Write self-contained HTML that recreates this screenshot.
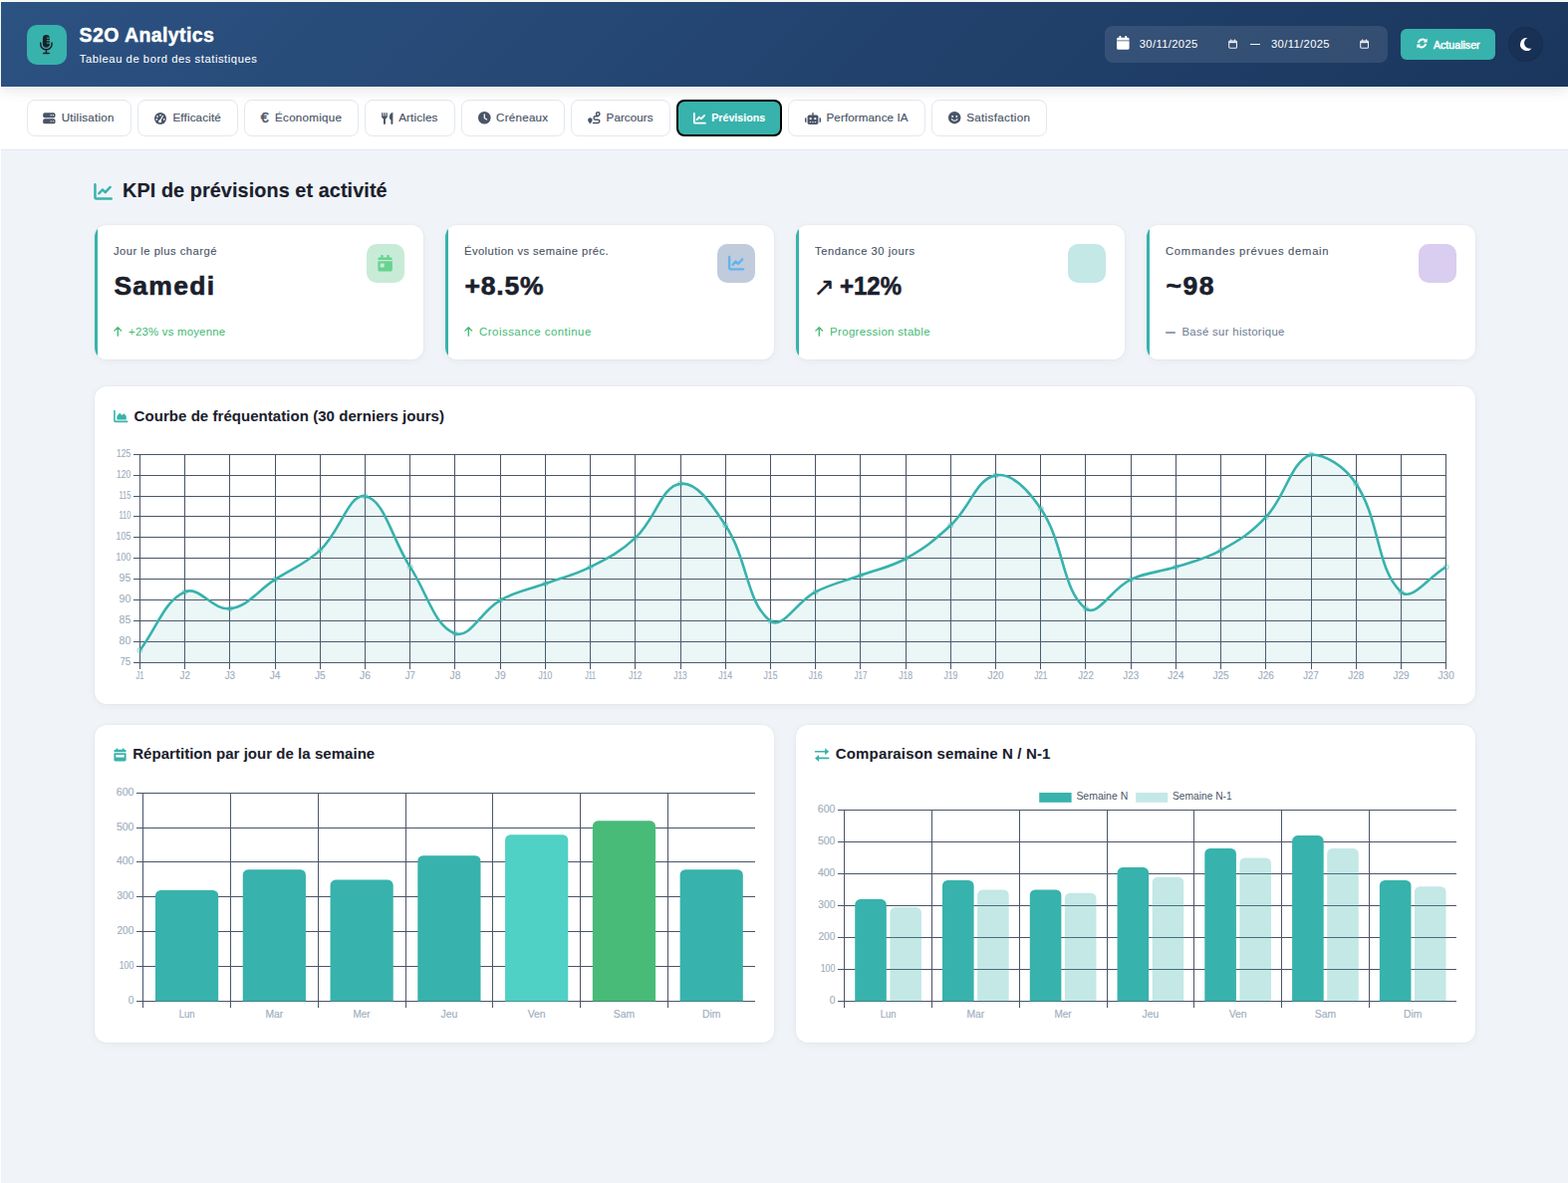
<!DOCTYPE html>
<html lang="fr">
<head>
<meta charset="utf-8">
<meta name="viewport" content="width=1574">
<title>S2O Analytics - Tableau de bord des statistiques</title>
<style>
*{box-sizing:border-box;margin:0;padding:0}
html,body{width:1574px;height:1188px;overflow:hidden;background:#fff}
body{font-family:"Liberation Sans", sans-serif;position:relative;-webkit-font-smoothing:antialiased}
#app{position:absolute;left:0;top:0;width:1574px;height:1188px;overflow:hidden;background:#fff}
.edge{position:absolute;left:0;top:0;width:1574px;height:1px;background:#f5f5f5;z-index:9}
.t{position:absolute;white-space:nowrap;display:block;font-weight:400;margin:0}
.i{position:absolute;display:block;overflow:visible}
button{font-family:"Liberation Sans", sans-serif;border:0;background:none;cursor:pointer;padding:0}
header{position:absolute;left:1px;top:2px;width:1573px;height:85px;background:linear-gradient(135deg,#2c5282 0%,#1a365d 100%);box-shadow:0 3px 14px rgba(0,0,0,.11);z-index:3}
.logo{position:absolute;left:26px;top:23px;width:40px;height:40px;border-radius:10px;background:#38b2ac}
.daterange{position:absolute;left:1108px;top:24px;width:284px;height:37px;border-radius:8px;background:rgba(255,255,255,.1)}
.dash{position:absolute;width:10px;height:1px;background:#fff;opacity:.95}
.refresh{position:absolute;left:1405px;top:27px;width:95px;height:31px;border-radius:6px;background:#38b2ac}
.theme{position:absolute;left:1513px;top:25px;width:35px;height:35px;border-radius:50%;background:rgba(0,0,0,.11);border:1px solid rgba(0,0,0,.10)}
nav{position:absolute;left:1px;top:87px;width:1573px;height:64px;background:#fff;border-bottom:1px solid #e2e8f0;z-index:2}
.tab{position:absolute;height:37px;border:1px solid #e2e8f0;border-radius:8px;background:#fff}
.tab.active{background:#38b2ac;border:2px solid #000}
main{position:absolute;left:1px;top:151px;width:1573px;height:1037px;background:#f0f4f8;z-index:1}
.sechead{position:absolute;left:0;top:0;width:100%;height:60px}
.kpi{position:absolute;width:330px;height:135px;border-radius:12px;background:linear-gradient(90deg,#38b2ac 0,#38b2ac 3px,#fff 3px,#fff 100%);padding-left:3px;box-shadow:0 0 2px rgba(45,55,72,.09),0 2px 9px rgba(0,0,0,.045)}
.kico{position:absolute;left:273px;top:19px;width:38px;height:39px;border-radius:10px}
.card{position:absolute;border-radius:12px;background:#fff;box-shadow:0 0 2px rgba(45,55,72,.09),0 2px 9px rgba(0,0,0,.045)}
.chart{position:absolute;display:block}
.ax text{font-family:"Liberation Sans", sans-serif;font-size:10.2px;fill:#a0aec0;stroke:#a0aec0;stroke-width:.15px}
.lg text{font-family:"Liberation Sans", sans-serif;font-size:10.3px;fill:#4a5568}
</style>
</head>
<body>
<div id="app">
<div class="edge"></div>
<header>
<div class="logo"><svg class="i" style="left:13.10px;top:9.90px;" width="12.80" height="19.20" viewBox="0 0 12.8 19.2" aria-hidden="true"><rect x="2.9" y="0" width="7" height="12.8" rx="3.5" fill="#1a202c"/><path d="M6.900 3.200h3M6.900 5.700h3M6.900 8.200h3" stroke="#38b2ac" stroke-width="1"/><path d="M.75 7.900v1.300a5.650 5.650 0 0 0 11.300 0V7.900" fill="none" stroke="#1a202c" stroke-width="1.500" stroke-linecap="round"/><path d="M6.400 15.200v3.200M3.600 18.450h5.600" fill="none" stroke="#1a202c" stroke-width="1.500" stroke-linecap="round"/></svg></div><h1 class="t" style="left:78.60px;top:21.00px;font-size:19.5px;line-height:25px;color:#fff;font-weight:700;letter-spacing:0.398px;-webkit-text-stroke:0.45px #fff;">S2O Analytics</h1><p class="t" style="left:78.80px;top:50.00px;font-size:11.2px;line-height:14px;color:#fff;letter-spacing:0.566px;-webkit-text-stroke:0.05px #fff;">Tableau de bord des statistiques</p><div class="daterange"><svg class="i" style="left:12.40px;top:10.20px;" width="12.60" height="13.80" viewBox="0 0 12.6 13.8" aria-hidden="true"><path fill="#fff" d="M2.400.7c0-.4.300-.7.700-.7h.6c.4 0 .7.300.7.700v1h3.800v-1c0-.4.300-.7.700-.7h.6c.4 0 .7.300.7.700v1h.9c.8 0 1.500.7 1.500 1.500v1.400H0V3.200c0-.8.700-1.500 1.500-1.500h.9z"/><path fill="#fff" d="M0 5.300h12.600v7c0 .8-.7 1.500-1.500 1.500H1.500c-.8 0-1.500-.7-1.500-1.500z"/></svg><span class="t" style="left:34.70px;top:11.31px;font-size:11.2px;line-height:14px;color:#fff;letter-spacing:0.381px;-webkit-text-stroke:0.03px #fff;">30/11/2025</span><svg class="i" style="left:124.00px;top:13.00px;opacity:.92" width="9.20" height="9.90" viewBox="0.3 0 9.4 10.2" aria-hidden="true"><rect x="1" y="2" width="8" height="7.5" rx="1" fill="none" stroke="#fff" stroke-width="1.1"/><path d="M1 3.4h8" stroke="#fff" stroke-width="1.8"/><path d="M3 0.6v1.6M7 0.6v1.6" stroke="#fff" stroke-width="1.1"/></svg><span class="dash" style="left:146px;top:18px"></span><span class="t" style="left:167.00px;top:11.31px;font-size:11.2px;line-height:14px;color:#fff;letter-spacing:0.381px;-webkit-text-stroke:0.03px #fff;">30/11/2025</span><svg class="i" style="left:256.40px;top:13.00px;opacity:.92" width="9.20" height="9.90" viewBox="0.3 0 9.4 10.2" aria-hidden="true"><rect x="1" y="2" width="8" height="7.5" rx="1" fill="none" stroke="#fff" stroke-width="1.1"/><path d="M1 3.4h8" stroke="#fff" stroke-width="1.8"/><path d="M3 0.6v1.6M7 0.6v1.6" stroke="#fff" stroke-width="1.1"/></svg></div><button class="refresh" type="button"><svg class="i" style="left:15.60px;top:9.40px;" width="11.00" height="11.00" viewBox="0 0 12 12" aria-hidden="true"><path fill="none" stroke="#fff" stroke-width="2.1" d="M2 5.6A4.7 4.7 0 0 1 10.2 3.4"/><path fill="#fff" d="M11.6 0.6v4.4H7.2z"/><path fill="none" stroke="#fff" stroke-width="2.1" d="M10 6.400A4.700 4.700 0 0 1 1.800 8.600"/><path fill="#fff" d="M.4 11.400V7h4.400z"/></svg><span class="t" style="left:32.90px;top:8.71px;font-size:10.7px;line-height:14px;color:#fff;letter-spacing:-0.015px;-webkit-text-stroke:0.45px #fff;">Actualiser</span></button><button class="theme" type="button" aria-label="Mode sombre"><svg class="i" style="left:12.00px;top:10.40px;" width="11.40" height="12.90" viewBox="0.9 0 11.4 12.9" aria-hidden="true"><path fill="#fff" d="M7.400 0A6.500 6.500 0 1 0 11.600 10.400 5.300 5.300 0 0 1 7.400 0z"/></svg></button>
</header>
<nav aria-label="Sections">
<button type="button" class="tab" style="left:26px;top:13px;width:105px"><svg class="i" style="left:15.10px;top:11.90px;" width="12.70" height="11.60" viewBox="0 0 13 12.2" aria-hidden="true"><rect x="0" y="0.3" width="13" height="5.200" rx="1.700" fill="#4a5568"/><rect x="0" y="6.700" width="13" height="5.200" rx="1.700" fill="#4a5568"/><circle cx="8.400" cy="2.900" r=".75" fill="#fff"/><circle cx="10.700" cy="2.900" r=".75" fill="#fff"/><circle cx="8.400" cy="9.300" r=".75" fill="#fff"/><circle cx="10.700" cy="9.300" r=".75" fill="#fff"/></svg><span class="t" style="left:33.70px;top:9.40px;font-size:11.6px;line-height:15px;color:#4a5568;letter-spacing:0.243px;-webkit-text-stroke:0.18px #4a5568;">Utilisation</span></button><button type="button" class="tab" style="left:137px;top:13px;width:101px"><svg class="i" style="left:16.00px;top:11.60px;" width="12.00" height="12.00" viewBox="0 0 12 12" aria-hidden="true"><circle cx="6" cy="6" r="6" fill="#4a5568"/><circle cx="6" cy="2.600" r=".85" fill="#fff"/><circle cx="3" cy="3.900" r=".85" fill="#fff"/><circle cx="2.300" cy="6.800" r=".85" fill="#fff"/><circle cx="9.700" cy="6.800" r=".85" fill="#fff"/><path d="M5.600 8.800L8.400 3.400" stroke="#fff" stroke-width="1.1" stroke-linecap="round"/><circle cx="5.600" cy="8.700" r="1.500" fill="#fff"/></svg><span class="t" style="left:34.40px;top:9.40px;font-size:11.6px;line-height:15px;color:#4a5568;letter-spacing:0.175px;-webkit-text-stroke:0.18px #4a5568;">Efficacité</span></button><button type="button" class="tab" style="left:244px;top:13px;width:115px"><span class="t" style="left:15.80px;top:8.31px;font-size:14.2px;line-height:18px;color:#4a5568;-webkit-text-stroke:0.5px #4a5568;">€</span><span class="t" style="left:30.10px;top:9.40px;font-size:11.6px;line-height:15px;color:#4a5568;letter-spacing:0.261px;-webkit-text-stroke:0.18px #4a5568;">Économique</span></button><button type="button" class="tab" style="left:365px;top:13px;width:91px"><svg class="i" style="left:16.00px;top:11.60px;" width="11.60" height="12.00" viewBox="0 0 11.8 12.2" aria-hidden="true"><path fill="none" stroke="#4a5568" stroke-width="1.3" stroke-linecap="round" d="M.8.7v3.400M3 .7v3.400M5.200.7v3.400"/><path fill="#4a5568" d="M.2 3.600h5.600c0 1.700-.8 2.600-1.800 3v4.600c0 .5-.4.900-1 .9s-1-.4-1-.9V6.600c-1-.4-1.800-1.300-1.800-3z"/><path fill="#4a5568" d="M11.600 0c-1.800 0-3.600 2-3.600 4.800 0 1.600.7 2.400 1.600 2.800v3.600c0 .5.400.9 1 .9s1-.4 1-.9z"/></svg><span class="t" style="left:33.20px;top:9.40px;font-size:11.6px;line-height:15px;color:#4a5568;letter-spacing:0.169px;-webkit-text-stroke:0.18px #4a5568;">Articles</span></button><button type="button" class="tab" style="left:462px;top:13px;width:104px"><svg class="i" style="left:15.70px;top:11.30px;" width="12.60" height="12.60" viewBox="0 0 12.8 12.8" aria-hidden="true"><circle cx="6.400" cy="6.400" r="6.400" fill="#4a5568"/><path d="M6.400 3v3.600l2.300 1.500" fill="none" stroke="#fff" stroke-width="1.300" stroke-linecap="round" stroke-linejoin="round"/></svg><span class="t" style="left:34.10px;top:9.40px;font-size:11.6px;line-height:15px;color:#4a5568;letter-spacing:0.246px;-webkit-text-stroke:0.18px #4a5568;">Créneaux</span></button><button type="button" class="tab" style="left:572px;top:13px;width:100px"><svg class="i" style="left:16.00px;top:11.40px;" width="12.70" height="12.40" viewBox="0 0 12.8 12.4" aria-hidden="true"><circle cx="10.3" cy="2.4" r="1.75" fill="none" stroke="#4a5568" stroke-width="1.5"/><path d="M2.4 6.200a2.300 2.300 0 0 1 2.300 2.300c0 1.300-1.500 2.900-2.300 3.800C1.600 11.400.1 9.800.1 8.500a2.300 2.300 0 0 1 2.300-2.300z" fill="#4a5568"/><path d="M10.3 4.800H7.800a1.700 1.700 0 0 0 0 3.400h2.400a1.700 1.700 0 0 1 0 3.400H5.600" fill="none" stroke="#4a5568" stroke-width="1.5" stroke-linecap="round"/></svg><span class="t" style="left:34.60px;top:9.40px;font-size:11.6px;line-height:15px;color:#4a5568;letter-spacing:0.071px;-webkit-text-stroke:0.18px #4a5568;">Parcours</span></button><button type="button" class="tab active" style="left:678px;top:13px;width:106px"><svg class="i" style="left:15.00px;top:10.60px;" width="12.60" height="11.60" viewBox="0 0 13.2 11.8" aria-hidden="true"><path d="M.9 .8v9.200c0 .6.400 1 1 1h10.600" fill="none" stroke="#fff" stroke-width="1.9" stroke-linecap="round" stroke-linejoin="round"/><path d="M3.700 7.300l2.500-2.700 2 1.900 3.500-3.700" fill="none" stroke="#fff" stroke-width="1.9" stroke-linecap="round" stroke-linejoin="round"/></svg><span class="t" style="left:33.20px;top:9.40px;font-size:10.7px;line-height:14px;color:#fff;font-weight:700;-webkit-text-stroke:0.1px #fff;">Prévisions</span></button><button type="button" class="tab" style="left:790px;top:13px;width:138px"><svg class="i" style="left:16.00px;top:11.90px;" width="16.00" height="12.00" viewBox="0 0 16 12" aria-hidden="true"><rect x="7.250" y="0" width="1.500" height="3" rx=".7" fill="#4a5568"/><rect x="2.600" y="2.400" width="10.800" height="9.600" rx="1.800" fill="#4a5568"/><rect x="0" y="5.200" width="1.500" height="4.600" rx=".6" fill="#4a5568"/><rect x="14.500" y="5.200" width="1.500" height="4.600" rx=".6" fill="#4a5568"/><circle cx="5.700" cy="6.200" r="1.100" fill="#fff"/><circle cx="10.300" cy="6.200" r="1.100" fill="#fff"/><path d="M4.800 9.700h1.400M7.300 9.700h1.400M9.800 9.700h1.400" stroke="#fff" stroke-width=".9"/></svg><span class="t" style="left:37.50px;top:9.40px;font-size:11.6px;line-height:15px;color:#4a5568;letter-spacing:0.112px;-webkit-text-stroke:0.18px #4a5568;">Performance IA</span></button><button type="button" class="tab" style="left:934px;top:13px;width:116px"><svg class="i" style="left:16.30px;top:11.30px;" width="12.40" height="12.40" viewBox="0 0 12.6 12.6" aria-hidden="true"><circle cx="6.300" cy="6.300" r="6.300" fill="#4a5568"/><circle cx="4.200" cy="5" r=".95" fill="#fff"/><circle cx="8.400" cy="5" r=".95" fill="#fff"/><path d="M3.500 7.800a3.300 3.300 0 0 0 5.600 0" fill="none" stroke="#fff" stroke-width="1.100" stroke-linecap="round"/></svg><span class="t" style="left:34.20px;top:9.40px;font-size:11.6px;line-height:15px;color:#4a5568;letter-spacing:0.342px;-webkit-text-stroke:0.18px #4a5568;">Satisfaction</span></button>
</nav>
<main>
<div class="sechead"><svg class="i" style="left:92.60px;top:32.60px;" width="19.20" height="16.60" viewBox="0 0 13.4 11.8" aria-hidden="true"><path d="M.9 .8v9.200c0 .6.400 1 1 1h10.600" fill="none" stroke="#38b2ac" stroke-width="1.75" stroke-linecap="round" stroke-linejoin="round"/><path d="M3.700 7.300l2.500-2.700 2 1.900 3.500-3.700" fill="none" stroke="#38b2ac" stroke-width="1.75" stroke-linecap="round" stroke-linejoin="round"/></svg><h2 class="t" style="left:122.00px;top:28.00px;font-size:19.8px;line-height:25px;color:#1a202c;font-weight:700;letter-spacing:0.102px;-webkit-text-stroke:0.15px #1a202c;">KPI de prévisions et activité</h2></div><article class="kpi" style="left:94px;top:75px"><div class="t" style="left:19.00px;top:19.40px;font-size:11.2px;line-height:14px;color:#4a5568;letter-spacing:0.493px;-webkit-text-stroke:0.13px #4a5568;">Jour le plus chargé</div><div class="t" style="left:19.40px;top:44.21px;font-size:26.5px;line-height:34px;color:#1a202c;font-weight:700;letter-spacing:1.267px;-webkit-text-stroke:0.6px #1a202c;">Samedi</div><svg class="i" style="left:18.70px;top:102.30px;" width="8.60" height="9.70" viewBox="0 0.4 9.2 10.6" aria-hidden="true"><path d="M4.600 10.400V1.400M.9 4.900L4.600 1.200l3.700 3.700" fill="none" stroke="#48bb78" stroke-width="1.500" stroke-linecap="round" stroke-linejoin="round"/></svg><span class="t" style="left:34.10px;top:99.50px;font-size:11.4px;line-height:15px;color:#48bb78;letter-spacing:0.212px;-webkit-text-stroke:0.05px #48bb78;">+23% vs moyenne</span><div class="kico" style="background:rgb(200,235,215)"><svg class="i" style="left:11.40px;top:10.70px;" width="15.30" height="16.40" viewBox="0 0 15.3 16.4" aria-hidden="true"><path fill="#68d391" d="M3.300 .6c0-.4.300-.6.700-.6h1c.4 0 .7.200.7.600v1.800h3.700V.6c0-.4.300-.6.700-.6h1c.4 0 .7.200.7.600v1.800h1.400c.8 0 1.500.7 1.500 1.500V5H.4V3.900c0-.8.700-1.500 1.500-1.500h1.400z"/><path fill="#68d391" d="M.4 6.300h14.500v8.600c0 .8-.7 1.500-1.500 1.500H1.900c-.8 0-1.500-.7-1.500-1.500z"/><rect x="2.700" y="8.400" width="4" height="4" rx=".4" fill="rgb(200,235,215)"/></svg></div></article><article class="kpi" style="left:446px;top:75px"><div class="t" style="left:19.00px;top:19.40px;font-size:11.2px;line-height:14px;color:#4a5568;letter-spacing:0.436px;-webkit-text-stroke:0.13px #4a5568;">Évolution vs semaine préc.</div><div class="t" style="left:19.40px;top:44.21px;font-size:26.5px;line-height:34px;color:#1a202c;font-weight:700;letter-spacing:0.827px;-webkit-text-stroke:0.6px #1a202c;">+8.5%</div><svg class="i" style="left:18.70px;top:102.30px;" width="8.60" height="9.70" viewBox="0 0.4 9.2 10.6" aria-hidden="true"><path d="M4.600 10.400V1.400M.9 4.900L4.600 1.200l3.700 3.700" fill="none" stroke="#48bb78" stroke-width="1.500" stroke-linecap="round" stroke-linejoin="round"/></svg><span class="t" style="left:34.10px;top:99.50px;font-size:11.4px;line-height:15px;color:#48bb78;letter-spacing:0.499px;-webkit-text-stroke:0.05px #48bb78;">Croissance continue</span><div class="kico" style="background:rgb(192,203,220)"><svg class="i" style="left:11.00px;top:11.80px;" width="16.30" height="14.30" viewBox="0 0 13.4 11.8" aria-hidden="true"><path d="M.9 .8v9.200c0 .6.400 1 1 1h10.600" fill="none" stroke="#63b3ed" stroke-width="1.9" stroke-linecap="round" stroke-linejoin="round"/><path d="M3.700 7.300l2.500-2.700 2 1.900 3.500-3.700" fill="none" stroke="#63b3ed" stroke-width="1.9" stroke-linecap="round" stroke-linejoin="round"/></svg></div></article><article class="kpi" style="left:798px;top:75px"><div class="t" style="left:19.00px;top:19.40px;font-size:11.2px;line-height:14px;color:#4a5568;letter-spacing:0.548px;-webkit-text-stroke:0.13px #4a5568;">Tendance 30 jours</div><span class="t" style="left:17.60px;top:46.00px;font-size:25.6px;line-height:32px;color:#1a202c;-webkit-text-stroke:0.35px #1a202c;font-family:'DejaVu Sans',sans-serif;">↗</span><div class="t" style="left:44.20px;top:44.21px;font-size:26.5px;line-height:34px;color:#1a202c;font-weight:700;-webkit-text-stroke:0.6px #1a202c;transform:scaleX(0.9049);transform-origin:0 50%;">+12%</div><svg class="i" style="left:18.70px;top:102.30px;" width="8.60" height="9.70" viewBox="0 0.4 9.2 10.6" aria-hidden="true"><path d="M4.600 10.400V1.400M.9 4.900L4.600 1.200l3.700 3.700" fill="none" stroke="#48bb78" stroke-width="1.500" stroke-linecap="round" stroke-linejoin="round"/></svg><span class="t" style="left:34.10px;top:99.50px;font-size:11.4px;line-height:15px;color:#48bb78;letter-spacing:0.356px;-webkit-text-stroke:0.05px #48bb78;">Progression stable</span><div class="kico" style="background:rgb(195,232,230)"></div></article><article class="kpi" style="left:1150px;top:75px"><div class="t" style="left:19.00px;top:19.40px;font-size:11.2px;line-height:14px;color:#4a5568;letter-spacing:0.759px;-webkit-text-stroke:0.13px #4a5568;">Commandes prévues demain</div><div class="t" style="left:19.40px;top:44.21px;font-size:26.5px;line-height:34px;color:#1a202c;font-weight:700;letter-spacing:1.523px;-webkit-text-stroke:0.6px #1a202c;">~98</div><svg class="i" style="left:18.60px;top:106.80px;" width="10.00" height="2.00" viewBox="0 0 10 2" aria-hidden="true"><path d="M.7 1h8.600" stroke="#718096" stroke-width="1.600" stroke-linecap="round"/></svg><span class="t" style="left:35.40px;top:99.50px;font-size:11.4px;line-height:15px;color:#718096;letter-spacing:0.305px;-webkit-text-stroke:0.05px #718096;">Basé sur historique</span><div class="kico" style="background:rgb(217,205,240)"></div></article><section class="card " style="left:94px;top:237px;width:1386px;height:319px"><svg class="i" style="left:18.80px;top:24.00px;" width="14.60" height="12.20" viewBox="0 0 14.8 12.4" aria-hidden="true"><path d="M.9 .6v10c0 .6.400 1 1 1h12" fill="none" stroke="#38b2ac" stroke-width="1.600" stroke-linecap="round" stroke-linejoin="round"/><path fill="#38b2ac" d="M3.400 9.600V6.200l2.300-2.900c.3-.4.900-.4 1.200 0l1.400 1.700 1.700-1.300c.3-.3.800-.2 1.100.1l1.900 2.400v3.400z"/></svg><h3 class="t" style="left:39.60px;top:20.00px;font-size:15.0px;line-height:19px;color:#1a202c;font-weight:700;letter-spacing:0.052px;-webkit-text-stroke:0.05px #1a202c;">Courbe de fréquentation (30 derniers jours)</h3><svg class="chart" style="left:0;top:0" width="1386" height="319" viewBox="95 388 1386 319" role="img" aria-label="Courbe de fréquentation (30 derniers jours)"><path d="M140.5 456.0V672.0M185.5 456.0V672.0M230.5 456.0V672.0M276.5 456.0V672.0M321.5 456.0V672.0M366.5 456.0V672.0M411.5 456.0V672.0M456.5 456.0V672.0M502.5 456.0V672.0M547.5 456.0V672.0M592.5 456.0V672.0M637.5 456.0V672.0M683.5 456.0V672.0M728.5 456.0V672.0M773.5 456.0V672.0M818.5 456.0V672.0M863.5 456.0V672.0M909.5 456.0V672.0M954.5 456.0V672.0M999.5 456.0V672.0M1044.5 456.0V672.0M1089.5 456.0V672.0M1135.5 456.0V672.0M1180.5 456.0V672.0M1225.5 456.0V672.0M1270.5 456.0V672.0M1316.5 456.0V672.0M1361.5 456.0V672.0M1406.5 456.0V672.0M1451.5 456.0V672.0M133.95 456.5H1452.185M133.95 477.5H1452.185M133.95 498.5H1452.185M133.95 518.5H1452.185M133.95 539.5H1452.185M133.95 560.5H1452.185M133.95 581.5H1452.185M133.95 602.5H1452.185M133.95 623.5H1452.185M133.95 644.5H1452.185M133.95 665.5H1452.185" stroke="#4a5568" stroke-width="1" fill="none" shape-rendering="crispEdges"/><path d="M140.45,652.96 C158.54,629.55 163.77,604.56 185.66,594.44 C199.94,587.84 213.80,613.53 230.88,611.16 C249.97,608.51 258.01,593.60 276.10,581.90 C294.18,570.20 305.67,567.10 321.31,552.64 C341.84,533.66 350.02,495.25 366.52,498.30 C386.19,501.94 393.27,541.19 411.74,569.36 C429.44,596.36 435.63,628.36 456.95,636.24 C471.81,641.73 482.69,613.60 502.17,602.80 C518.87,593.54 529.30,592.77 547.38,586.08 C565.47,579.39 575.52,578.05 592.60,569.36 C611.69,559.65 622.17,554.56 637.81,540.10 C658.35,521.12 663.70,488.44 683.03,485.76 C699.87,483.42 714.97,507.31 728.24,527.56 C751.14,562.49 749.46,605.95 773.46,623.70 C785.63,632.70 799.59,604.15 818.67,594.44 C835.76,585.75 845.80,584.41 863.89,577.72 C881.98,571.03 892.41,570.26 909.11,561.00 C928.58,550.20 937.88,542.75 954.32,527.56 C974.06,509.31 979.80,481.05 999.53,477.40 C1015.97,474.36 1032.52,492.74 1044.75,510.84 C1068.69,546.25 1065.68,592.08 1089.96,611.16 C1101.85,620.50 1115.85,590.84 1135.18,581.90 C1152.02,574.12 1162.55,575.13 1180.39,569.36 C1198.73,563.43 1208.91,561.90 1225.61,552.64 C1245.09,541.84 1255.59,535.39 1270.83,519.20 C1291.76,496.94 1294.72,464.38 1316.04,456.50 C1330.89,456.50 1349.90,468.44 1361.25,485.76 C1386.07,523.62 1381.34,571.21 1406.47,594.44 C1417.51,604.65 1433.60,579.39 1451.68,569.36 L1451.685,665.5 L140.45,665.5 Z" fill="rgba(56,178,172,0.1)"/><path d="M140.45,652.96 C158.54,629.55 163.77,604.56 185.66,594.44 C199.94,587.84 213.80,613.53 230.88,611.16 C249.97,608.51 258.01,593.60 276.10,581.90 C294.18,570.20 305.67,567.10 321.31,552.64 C341.84,533.66 350.02,495.25 366.52,498.30 C386.19,501.94 393.27,541.19 411.74,569.36 C429.44,596.36 435.63,628.36 456.95,636.24 C471.81,641.73 482.69,613.60 502.17,602.80 C518.87,593.54 529.30,592.77 547.38,586.08 C565.47,579.39 575.52,578.05 592.60,569.36 C611.69,559.65 622.17,554.56 637.81,540.10 C658.35,521.12 663.70,488.44 683.03,485.76 C699.87,483.42 714.97,507.31 728.24,527.56 C751.14,562.49 749.46,605.95 773.46,623.70 C785.63,632.70 799.59,604.15 818.67,594.44 C835.76,585.75 845.80,584.41 863.89,577.72 C881.98,571.03 892.41,570.26 909.11,561.00 C928.58,550.20 937.88,542.75 954.32,527.56 C974.06,509.31 979.80,481.05 999.53,477.40 C1015.97,474.36 1032.52,492.74 1044.75,510.84 C1068.69,546.25 1065.68,592.08 1089.96,611.16 C1101.85,620.50 1115.85,590.84 1135.18,581.90 C1152.02,574.12 1162.55,575.13 1180.39,569.36 C1198.73,563.43 1208.91,561.90 1225.61,552.64 C1245.09,541.84 1255.59,535.39 1270.83,519.20 C1291.76,496.94 1294.72,464.38 1316.04,456.50 C1330.89,456.50 1349.90,468.44 1361.25,485.76 C1386.07,523.62 1381.34,571.21 1406.47,594.44 C1417.51,604.65 1433.60,579.39 1451.68,569.36" fill="none" stroke="#38b2ac" stroke-width="2.6" stroke-linejoin="round" stroke-linecap="butt"/><g fill="rgba(56,178,172,0.1)" stroke="rgba(56,178,172,0.5)" stroke-width="0.9"><circle cx="140.45" cy="652.96" r="2.6"/><circle cx="185.66" cy="594.44" r="2.6"/><circle cx="230.88" cy="611.16" r="2.6"/><circle cx="276.10" cy="581.90" r="2.6"/><circle cx="321.31" cy="552.64" r="2.6"/><circle cx="366.52" cy="498.30" r="2.6"/><circle cx="411.74" cy="569.36" r="2.6"/><circle cx="456.95" cy="636.24" r="2.6"/><circle cx="502.17" cy="602.80" r="2.6"/><circle cx="547.38" cy="586.08" r="2.6"/><circle cx="592.60" cy="569.36" r="2.6"/><circle cx="637.81" cy="540.10" r="2.6"/><circle cx="683.03" cy="485.76" r="2.6"/><circle cx="728.24" cy="527.56" r="2.6"/><circle cx="773.46" cy="623.70" r="2.6"/><circle cx="818.67" cy="594.44" r="2.6"/><circle cx="863.89" cy="577.72" r="2.6"/><circle cx="909.11" cy="561.00" r="2.6"/><circle cx="954.32" cy="527.56" r="2.6"/><circle cx="999.53" cy="477.40" r="2.6"/><circle cx="1044.75" cy="510.84" r="2.6"/><circle cx="1089.96" cy="611.16" r="2.6"/><circle cx="1135.18" cy="581.90" r="2.6"/><circle cx="1180.39" cy="569.36" r="2.6"/><circle cx="1225.61" cy="552.64" r="2.6"/><circle cx="1270.83" cy="519.20" r="2.6"/><circle cx="1316.04" cy="456.50" r="2.6"/><circle cx="1361.25" cy="485.76" r="2.6"/><circle cx="1406.47" cy="594.44" r="2.6"/><circle cx="1451.68" cy="569.36" r="2.6"/></g><g class="ax" text-anchor="end"><text x="131.3" y="459.0" textLength="14.2" lengthAdjust="spacingAndGlyphs">125</text><text x="131.3" y="480.0" textLength="14.2" lengthAdjust="spacingAndGlyphs">120</text><text x="131.3" y="501.0" textLength="11.8" lengthAdjust="spacingAndGlyphs">115</text><text x="131.3" y="521.0" textLength="11.8" lengthAdjust="spacingAndGlyphs">110</text><text x="131.3" y="542.0" textLength="14.7" lengthAdjust="spacingAndGlyphs">105</text><text x="131.3" y="563.0" textLength="14.7" lengthAdjust="spacingAndGlyphs">100</text><text x="131.3" y="584.0" textLength="11.7" lengthAdjust="spacingAndGlyphs">95</text><text x="131.3" y="605.0" textLength="11.7" lengthAdjust="spacingAndGlyphs">90</text><text x="131.3" y="626.0" textLength="11.7" lengthAdjust="spacingAndGlyphs">85</text><text x="131.3" y="647.0" textLength="11.7" lengthAdjust="spacingAndGlyphs">80</text><text x="131.3" y="668.0" textLength="10.9" lengthAdjust="spacingAndGlyphs">75</text></g><g class="ax" text-anchor="middle"><text x="140.4" y="682.0" textLength="7.9" lengthAdjust="spacingAndGlyphs">J1</text><text x="185.7" y="682.0" textLength="10.3" lengthAdjust="spacingAndGlyphs">J2</text><text x="230.9" y="682.0" textLength="10.4" lengthAdjust="spacingAndGlyphs">J3</text><text x="276.1" y="682.0">J4</text><text x="321.3" y="682.0">J5</text><text x="366.5" y="682.0">J6</text><text x="411.7" y="682.0" textLength="10.0" lengthAdjust="spacingAndGlyphs">J7</text><text x="457.0" y="682.0">J8</text><text x="502.2" y="682.0">J9</text><text x="547.4" y="682.0" textLength="13.8" lengthAdjust="spacingAndGlyphs">J10</text><text x="592.6" y="682.0" textLength="10.9" lengthAdjust="spacingAndGlyphs">J11</text><text x="637.8" y="682.0" textLength="13.2" lengthAdjust="spacingAndGlyphs">J12</text><text x="683.0" y="682.0" textLength="13.4" lengthAdjust="spacingAndGlyphs">J13</text><text x="728.2" y="682.0" textLength="13.8" lengthAdjust="spacingAndGlyphs">J14</text><text x="773.5" y="682.0" textLength="13.8" lengthAdjust="spacingAndGlyphs">J15</text><text x="818.7" y="682.0" textLength="13.8" lengthAdjust="spacingAndGlyphs">J16</text><text x="863.9" y="682.0" textLength="13.0" lengthAdjust="spacingAndGlyphs">J17</text><text x="909.1" y="682.0" textLength="13.8" lengthAdjust="spacingAndGlyphs">J18</text><text x="954.3" y="682.0" textLength="13.8" lengthAdjust="spacingAndGlyphs">J19</text><text x="999.5" y="682.0" textLength="16.1" lengthAdjust="spacingAndGlyphs">J20</text><text x="1044.8" y="682.0" textLength="13.2" lengthAdjust="spacingAndGlyphs">J21</text><text x="1090.0" y="682.0" textLength="15.6" lengthAdjust="spacingAndGlyphs">J22</text><text x="1135.2" y="682.0" textLength="15.8" lengthAdjust="spacingAndGlyphs">J23</text><text x="1180.4" y="682.0" textLength="16.1" lengthAdjust="spacingAndGlyphs">J24</text><text x="1225.6" y="682.0" textLength="16.1" lengthAdjust="spacingAndGlyphs">J25</text><text x="1270.8" y="682.0" textLength="16.2" lengthAdjust="spacingAndGlyphs">J26</text><text x="1316.0" y="682.0" textLength="15.4" lengthAdjust="spacingAndGlyphs">J27</text><text x="1361.3" y="682.0" textLength="16.1" lengthAdjust="spacingAndGlyphs">J28</text><text x="1406.5" y="682.0" textLength="16.1" lengthAdjust="spacingAndGlyphs">J29</text><text x="1451.7" y="682.0" textLength="16.2" lengthAdjust="spacingAndGlyphs">J30</text></g></svg></section><section class="card " style="left:94px;top:577px;width:682px;height:319px"><svg class="i" style="left:18.60px;top:23.00px;" width="13.00" height="14.00" viewBox="0 0 13 13.2" aria-hidden="true"><path fill="#38b2ac" d="M2.600 0h1.600v1.400h4.600V0h1.600v1.400h.8c.8 0 1.400.6 1.400 1.400v1H.4v-1c0-.8.600-1.400 1.400-1.400h.8z"/><path fill="#38b2ac" d="M.4 4.800h12.200v6.800c0 .8-.600 1.400-1.400 1.400H1.800c-.8 0-1.400-.6-1.400-1.400z"/><rect x="2.300" y="6.600" width="8.400" height="2.600" rx=".4" fill="#fff"/></svg><h3 class="t" style="left:38.20px;top:19.00px;font-size:15.0px;line-height:19px;color:#1a202c;font-weight:700;letter-spacing:0.038px;-webkit-text-stroke:0.05px #1a202c;">Répartition par jour de la semaine</h3><svg class="chart" style="left:0;top:0" width="682" height="319" viewBox="95 728 682 319" role="img" aria-label="Répartition par jour de la semaine"><path d="M143.5 796.0V1012.0M231.5 796.0V1012.0M319.5 796.0V1012.0M407.5 796.0V1012.0M494.5 796.0V1012.0M582.5 796.0V1012.0M670.5 796.0V1012.0M137.2 796.5H758.1M137.2 831.5H758.1M137.2 865.5H758.1M137.2 900.5H758.1M137.2 935.5H758.1M137.2 970.5H758.1M137.2 1005.5H758.1" stroke="#4a5568" stroke-width="1" fill="none" shape-rendering="crispEdges"/><path d="M155.99,1005.5V899.33A5.3,5.3 0 0 1 161.29,894.03H213.88A5.3,5.3 0 0 1 219.18,899.33V1005.5Z" fill="#38b2ac"/><path d="M243.76,1005.5V878.43A5.3,5.3 0 0 1 249.06,873.13H301.65A5.3,5.3 0 0 1 306.95,878.43V1005.5Z" fill="#38b2ac"/><path d="M331.53,1005.5V888.88A5.3,5.3 0 0 1 336.83,883.58H389.43A5.3,5.3 0 0 1 394.73,888.88V1005.5Z" fill="#38b2ac"/><path d="M419.30,1005.5V864.50A5.3,5.3 0 0 1 424.60,859.20H477.20A5.3,5.3 0 0 1 482.50,864.50V1005.5Z" fill="#38b2ac"/><path d="M507.07,1005.5V843.60A5.3,5.3 0 0 1 512.37,838.30H564.97A5.3,5.3 0 0 1 570.27,843.60V1005.5Z" fill="#4fd1c5"/><path d="M594.85,1005.5V829.67A5.3,5.3 0 0 1 600.15,824.37H652.74A5.3,5.3 0 0 1 658.04,829.67V1005.5Z" fill="#48bb78"/><path d="M682.62,1005.5V878.43A5.3,5.3 0 0 1 687.92,873.13H740.51A5.3,5.3 0 0 1 745.81,878.43V1005.5Z" fill="#38b2ac"/><g class="ax" text-anchor="end"><text x="134.4" y="799.0" textLength="17.6" lengthAdjust="spacingAndGlyphs">600</text><text x="134.4" y="834.0" textLength="17.5" lengthAdjust="spacingAndGlyphs">500</text><text x="134.4" y="868.0" textLength="17.5" lengthAdjust="spacingAndGlyphs">400</text><text x="134.4" y="903.0" textLength="17.2" lengthAdjust="spacingAndGlyphs">300</text><text x="134.4" y="938.0">200</text><text x="134.4" y="973.0" textLength="14.7" lengthAdjust="spacingAndGlyphs">100</text><text x="134.4" y="1008.0">0</text></g><g class="ax" text-anchor="middle"><text x="187.6" y="1022.1" textLength="15.9" lengthAdjust="spacingAndGlyphs">Lun</text><text x="275.4" y="1022.1" textLength="17.8" lengthAdjust="spacingAndGlyphs">Mar</text><text x="363.1" y="1022.1" textLength="17.2" lengthAdjust="spacingAndGlyphs">Mer</text><text x="450.9" y="1022.1" textLength="16.7" lengthAdjust="spacingAndGlyphs">Jeu</text><text x="538.7" y="1022.1" textLength="18.0" lengthAdjust="spacingAndGlyphs">Ven</text><text x="626.4" y="1022.1" textLength="21.3" lengthAdjust="spacingAndGlyphs">Sam</text><text x="714.2" y="1022.1" textLength="18.4" lengthAdjust="spacingAndGlyphs">Dim</text></g></svg></section><section class="card " style="left:798px;top:577px;width:682px;height:319px"><svg class="i" style="left:18.80px;top:23.00px;" width="14.20" height="14.00" viewBox="0 0 14 13.8" aria-hidden="true"><path d="M.6 3.700h10.200" stroke="#38b2ac" stroke-width="1.700" stroke-linecap="round"/><path fill="#38b2ac" d="M10 .3l4 3.400-4 3.400z"/><path d="M13.400 10.300H3.200" stroke="#38b2ac" stroke-width="1.700" stroke-linecap="round"/><path fill="#38b2ac" d="M4 6.900L0 10.300l4 3.400z"/></svg><h3 class="t" style="left:39.80px;top:19.00px;font-size:15.0px;line-height:19px;color:#1a202c;font-weight:700;letter-spacing:0.149px;-webkit-text-stroke:0.05px #1a202c;">Comparaison semaine N / N-1</h3><svg class="chart" style="left:0;top:0" width="682" height="319" viewBox="799 728 682 319" role="img" aria-label="Comparaison semaine N / N-1"><path d="M847.5 813.0V1012.0M935.5 813.0V1012.0M1023.5 813.0V1012.0M1111.5 813.0V1012.0M1198.5 813.0V1012.0M1286.5 813.0V1012.0M1374.5 813.0V1012.0M841.2 813.5H1462.1M841.2 845.5H1462.1M841.2 877.5H1462.1M841.2 909.5H1462.1M841.2 941.5H1462.1M841.2 973.5H1462.1M841.2 1005.5H1462.1" stroke="#4a5568" stroke-width="1" fill="none" shape-rendering="crispEdges"/><path d="M858.23,1005.5V908.40A5.3,5.3 0 0 1 863.53,903.10H884.53A5.3,5.3 0 0 1 889.83,908.40V1005.5Z" fill="#38b2ac"/><path d="M946.00,1005.5V889.20A5.3,5.3 0 0 1 951.30,883.90H972.30A5.3,5.3 0 0 1 977.60,889.20V1005.5Z" fill="#38b2ac"/><path d="M1033.78,1005.5V898.80A5.3,5.3 0 0 1 1039.08,893.50H1060.07A5.3,5.3 0 0 1 1065.37,898.80V1005.5Z" fill="#38b2ac"/><path d="M1121.55,1005.5V876.40A5.3,5.3 0 0 1 1126.85,871.10H1147.84A5.3,5.3 0 0 1 1153.14,876.40V1005.5Z" fill="#38b2ac"/><path d="M1209.32,1005.5V857.20A5.3,5.3 0 0 1 1214.62,851.90H1235.62A5.3,5.3 0 0 1 1240.92,857.20V1005.5Z" fill="#38b2ac"/><path d="M1297.09,1005.5V844.40A5.3,5.3 0 0 1 1302.39,839.10H1323.39A5.3,5.3 0 0 1 1328.69,844.40V1005.5Z" fill="#38b2ac"/><path d="M1384.86,1005.5V889.20A5.3,5.3 0 0 1 1390.16,883.90H1411.16A5.3,5.3 0 0 1 1416.46,889.20V1005.5Z" fill="#38b2ac"/><path d="M893.34,1005.5V916.40A5.3,5.3 0 0 1 898.64,911.10H919.64A5.3,5.3 0 0 1 924.94,916.40V1005.5Z" fill="#38b2ac" fill-opacity="0.3"/><path d="M981.11,1005.5V898.80A5.3,5.3 0 0 1 986.41,893.50H1007.41A5.3,5.3 0 0 1 1012.71,898.80V1005.5Z" fill="#38b2ac" fill-opacity="0.3"/><path d="M1068.88,1005.5V902.00A5.3,5.3 0 0 1 1074.18,896.70H1095.18A5.3,5.3 0 0 1 1100.48,902.00V1005.5Z" fill="#38b2ac" fill-opacity="0.3"/><path d="M1156.66,1005.5V886.00A5.3,5.3 0 0 1 1161.96,880.70H1182.95A5.3,5.3 0 0 1 1188.25,886.00V1005.5Z" fill="#38b2ac" fill-opacity="0.3"/><path d="M1244.43,1005.5V866.80A5.3,5.3 0 0 1 1249.73,861.50H1270.72A5.3,5.3 0 0 1 1276.02,866.80V1005.5Z" fill="#38b2ac" fill-opacity="0.3"/><path d="M1332.20,1005.5V857.20A5.3,5.3 0 0 1 1337.50,851.90H1358.50A5.3,5.3 0 0 1 1363.80,857.20V1005.5Z" fill="#38b2ac" fill-opacity="0.3"/><path d="M1419.97,1005.5V895.60A5.3,5.3 0 0 1 1425.27,890.30H1446.27A5.3,5.3 0 0 1 1451.57,895.60V1005.5Z" fill="#38b2ac" fill-opacity="0.3"/><g class="ax" text-anchor="end"><text x="838.4" y="816.0" textLength="17.6" lengthAdjust="spacingAndGlyphs">600</text><text x="838.4" y="848.0" textLength="17.5" lengthAdjust="spacingAndGlyphs">500</text><text x="838.4" y="880.0" textLength="17.5" lengthAdjust="spacingAndGlyphs">400</text><text x="838.4" y="912.0" textLength="17.2" lengthAdjust="spacingAndGlyphs">300</text><text x="838.4" y="944.0">200</text><text x="838.4" y="976.0" textLength="14.7" lengthAdjust="spacingAndGlyphs">100</text><text x="838.4" y="1008.0">0</text></g><g class="ax" text-anchor="middle"><text x="891.6" y="1022.1" textLength="15.9" lengthAdjust="spacingAndGlyphs">Lun</text><text x="979.4" y="1022.1" textLength="17.8" lengthAdjust="spacingAndGlyphs">Mar</text><text x="1067.1" y="1022.1" textLength="17.2" lengthAdjust="spacingAndGlyphs">Mer</text><text x="1154.9" y="1022.1" textLength="16.7" lengthAdjust="spacingAndGlyphs">Jeu</text><text x="1242.7" y="1022.1" textLength="18.0" lengthAdjust="spacingAndGlyphs">Ven</text><text x="1330.4" y="1022.1" textLength="21.3" lengthAdjust="spacingAndGlyphs">Sam</text><text x="1418.2" y="1022.1" textLength="18.4" lengthAdjust="spacingAndGlyphs">Dim</text></g><rect x="1043.2" y="796" width="32.4" height="9.8" fill="#38b2ac"/><rect x="1140.2" y="796" width="32.0" height="9.8" fill="#38b2ac" fill-opacity="0.3"/><g class="lg"><text x="1080.4" y="803.2" textLength="51.8" lengthAdjust="spacingAndGlyphs">Semaine N</text><text x="1177.0" y="803.2" textLength="59.6" lengthAdjust="spacingAndGlyphs">Semaine N-1</text></g></svg></section>
</main>
</div>
</body>
</html>
